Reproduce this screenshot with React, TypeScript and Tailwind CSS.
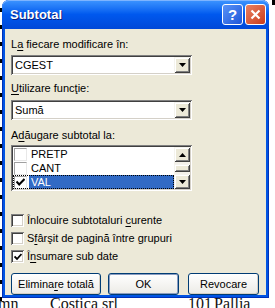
import React from 'react';

const font = { fontFamily: '"Liberation Sans", Arial, sans-serif' };

const sunken =
  'shadow-[inset_1px_1px_0_#808080,inset_-1px_-1px_0_#ffffff,inset_2px_2px_0_#404040,inset_-2px_-2px_0_#d4d0c8]';
const raised =
  'shadow-[inset_1px_1px_0_#f4f3ee,inset_-1px_-1px_0_#404040,inset_2px_2px_0_#ffffff,inset_-2px_-2px_0_#808080]';

const Arrow: React.FC<{ up?: boolean }> = ({ up }) => (
  <svg width="7" height="4" viewBox="0 0 7 4">
    <path d={up ? 'M3.5 0L7 4H0z' : 'M0 0h7L3.5 4z'} fill="#000" />
  </svg>
);

const ArrowButton: React.FC<{ up?: boolean; h?: string }> = ({ up, h = 'h-[15px]' }) => (
  <div className={`w-[16px] ${h} bg-[#ece9d8] ${raised} flex items-center justify-center`}>
    <Arrow up={up} />
  </div>
);

const Ul: React.FC<{ children: React.ReactNode }> = ({ children }) => <span className="underline underline-offset-2">{children}</span>;

const Combo: React.FC<{ value: string }> = ({ value }) => (
  <div className={`w-[181px] h-[20px] bg-white ${sunken} flex items-center pl-[4px] pr-[2px]`}>
    <span className="flex-1 text-[11px] leading-none">{value}</span>
    <ArrowButton h="h-[16px]" />
  </div>
);

const Check: React.FC<{ checked?: boolean }> = ({ checked }) => (
  <div className={`w-[13px] h-[13px] bg-white ${sunken} flex items-center justify-center`}>
    {checked && (
      <svg width="8" height="8" viewBox="0 0 8 8">
        <path d="M0.5 3.5L3 6L7.5 1" stroke="#000" strokeWidth="1.8" fill="none" />
      </svg>
    )}
  </div>
);

const ListCheck: React.FC<{ checked?: boolean }> = ({ checked }) => (
  <div className="w-[13px] h-[13px] bg-white border border-t-[#a0a0a0] border-l-[#a0a0a0] border-r-[#e8e8e8] border-b-[#e8e8e8] flex items-center justify-center">
    {checked && (
      <svg width="9" height="8" viewBox="0 0 9 8">
        <path d="M0.5 3.5L3.2 6.5L8.5 1" stroke="#000" strokeWidth="2" fill="none" />
      </svg>
    )}
  </div>
);

const Button: React.FC<{ children: React.ReactNode; width: string; def?: boolean }> = ({ children, width, def }) => (
  <div
    className={`${width} shrink-0 h-[22px] rounded-[3px] border border-[#003c74] bg-gradient-to-b from-[#ffffff] to-[#ecebe6] flex items-center justify-center text-[11px] ${
      def ? 'shadow-[inset_0_0_0_1px_#8a9cc0]' : 'shadow-[inset_-1px_-1px_0_#d6d0c5]'
    }`}
  >
    {children}
  </div>
);

export default function App() {
  const rows = ['PRETP', 'CANT', 'VAL'];
  return (
    <div className="relative w-[275px] h-[308px] overflow-hidden bg-white text-black" style={font}>
      {/* spreadsheet behind the dialog */}
      <div className="absolute left-0 top-0 w-[3px] h-full flex flex-col gap-[13px] pt-[8px]">
        {Array.from({ length: 18 }).map((_, i) => (
          <div key={i} className="w-[2px] h-[4px] bg-black" />
        ))}
      </div>
      <div className="absolute right-0 top-0 w-[3px] h-[5px] bg-black" />
      <div
        className="absolute left-0 top-[296px] w-full flex text-[16px] leading-none text-[#111]"
        style={{ fontFamily: '"Liberation Serif", "Times New Roman", serif' }}
      >
        <span className="ml-[-2px] w-[52px]">mn</span>
        <span className="w-[138px]">Costica srl</span>
        <span className="w-[26px]">101</span>
        <span>Pallia</span>
      </div>

      {/* dialog window */}
      <div className="absolute left-[2px] top-0 w-[267px] h-[298px] rounded-t-[7px] bg-[#0054e3] flex flex-col px-[3px] pb-[3px] shadow-[inset_0_0_0_1px_#0030b8]">
        <div className="h-[30px] -mx-[3px] rounded-t-[7px] bg-gradient-to-b from-[#3d95ff] via-[#0058ee] to-[#0048d8] flex items-center pl-[8px] pr-[3px] shadow-[inset_0_1px_0_#7db4ff]">
          <span className="flex-1 text-white font-bold text-[13px] [text-shadow:1px_1px_0_#0a1e7a]">Subtotal</span>
          <div className="flex gap-[2px]">
            <div className="w-[21px] h-[21px] rounded-[3px] border border-white bg-gradient-to-br from-[#5a93f7] to-[#1f55d8] flex items-center justify-center text-white font-bold text-[15px] leading-none">
              ?
            </div>
            <div className="w-[21px] h-[21px] rounded-[3px] border border-white bg-gradient-to-br from-[#e98062] to-[#c93a16] flex items-center justify-center">
              <svg width="11" height="11" viewBox="0 0 11 11">
                <path d="M1.5 1.5L9.5 9.5M9.5 1.5L1.5 9.5" stroke="#fff" strokeWidth="2.2" />
              </svg>
            </div>
          </div>
        </div>

        <div className="flex-1 bg-[#ece9d8] flex flex-col pl-[6px] pt-[9px] text-[11px] leading-[13px]">
          <div>
            L<Ul>a</Ul> fiecare modificare în:
          </div>
          <div className="mt-[4px]">
            <Combo value="CGEST" />
          </div>
          <div className="mt-[7px]">
            <Ul>U</Ul>tilizare funcţie:
          </div>
          <div className="mt-[5px]">
            <Combo value="Sumă" />
          </div>
          <div className="mt-[9px]">
            A<Ul>d</Ul>ăugare subtotal la:
          </div>
          <div className={`mt-[3px] w-[181px] h-[46px] bg-white ${sunken} flex p-[2px]`}>
            <div className="flex-1 flex flex-col pt-[1px]">
              {rows.map((r) => {
                const sel = r === 'VAL';
                return (
                  <div
                    key={r}
                    className={`h-[14px] flex items-center gap-[2px] pl-[1px] ${sel ? 'outline-1 outline-dotted outline-offset-[-1px] outline-black' : ''}`}
                  >
                    <ListCheck checked={sel} />
                    <span className={`flex-1 h-full flex items-center pl-[2px] ${sel ? 'bg-[#316ac5] text-white' : ''}`}>{r}</span>
                  </div>
                );
              })}
            </div>
            <div className="w-[16px] flex flex-col bg-[#f3f1ea]">
              <ArrowButton up />
              <div className="flex-1 flex flex-col justify-center">
                <div className={`h-[8px] bg-[#ece9d8] ${raised}`} />
              </div>
              <ArrowButton />
            </div>
          </div>

          <div className="mt-[23px] flex items-center gap-[3px]">
            <Check />
            <span>
              Înlocuire subtotaluri <Ul>c</Ul>urente
            </span>
          </div>
          <div className="mt-[5px] flex items-center gap-[3px]">
            <Check />
            <span>
              S<Ul>f</Ul>ârşit de pagină între grupuri
            </span>
          </div>
          <div className="mt-[5px] flex items-center gap-[3px]">
            <Check checked />
            <span>
              Î<Ul>n</Ul>sumare sub date
            </span>
          </div>

          <div className="mt-[10px] flex">
            <Button width="w-[90px]">
              Elimina<Ul>r</Ul>e totală
            </Button>
            <div className="w-[7px] shrink-0" />
            <Button width="w-[71px]" def>
              OK
            </Button>
            <div className="w-[9px] shrink-0" />
            <Button width="w-[71px]">Revocare</Button>
          </div>
        </div>
      </div>
    </div>
  );
}
